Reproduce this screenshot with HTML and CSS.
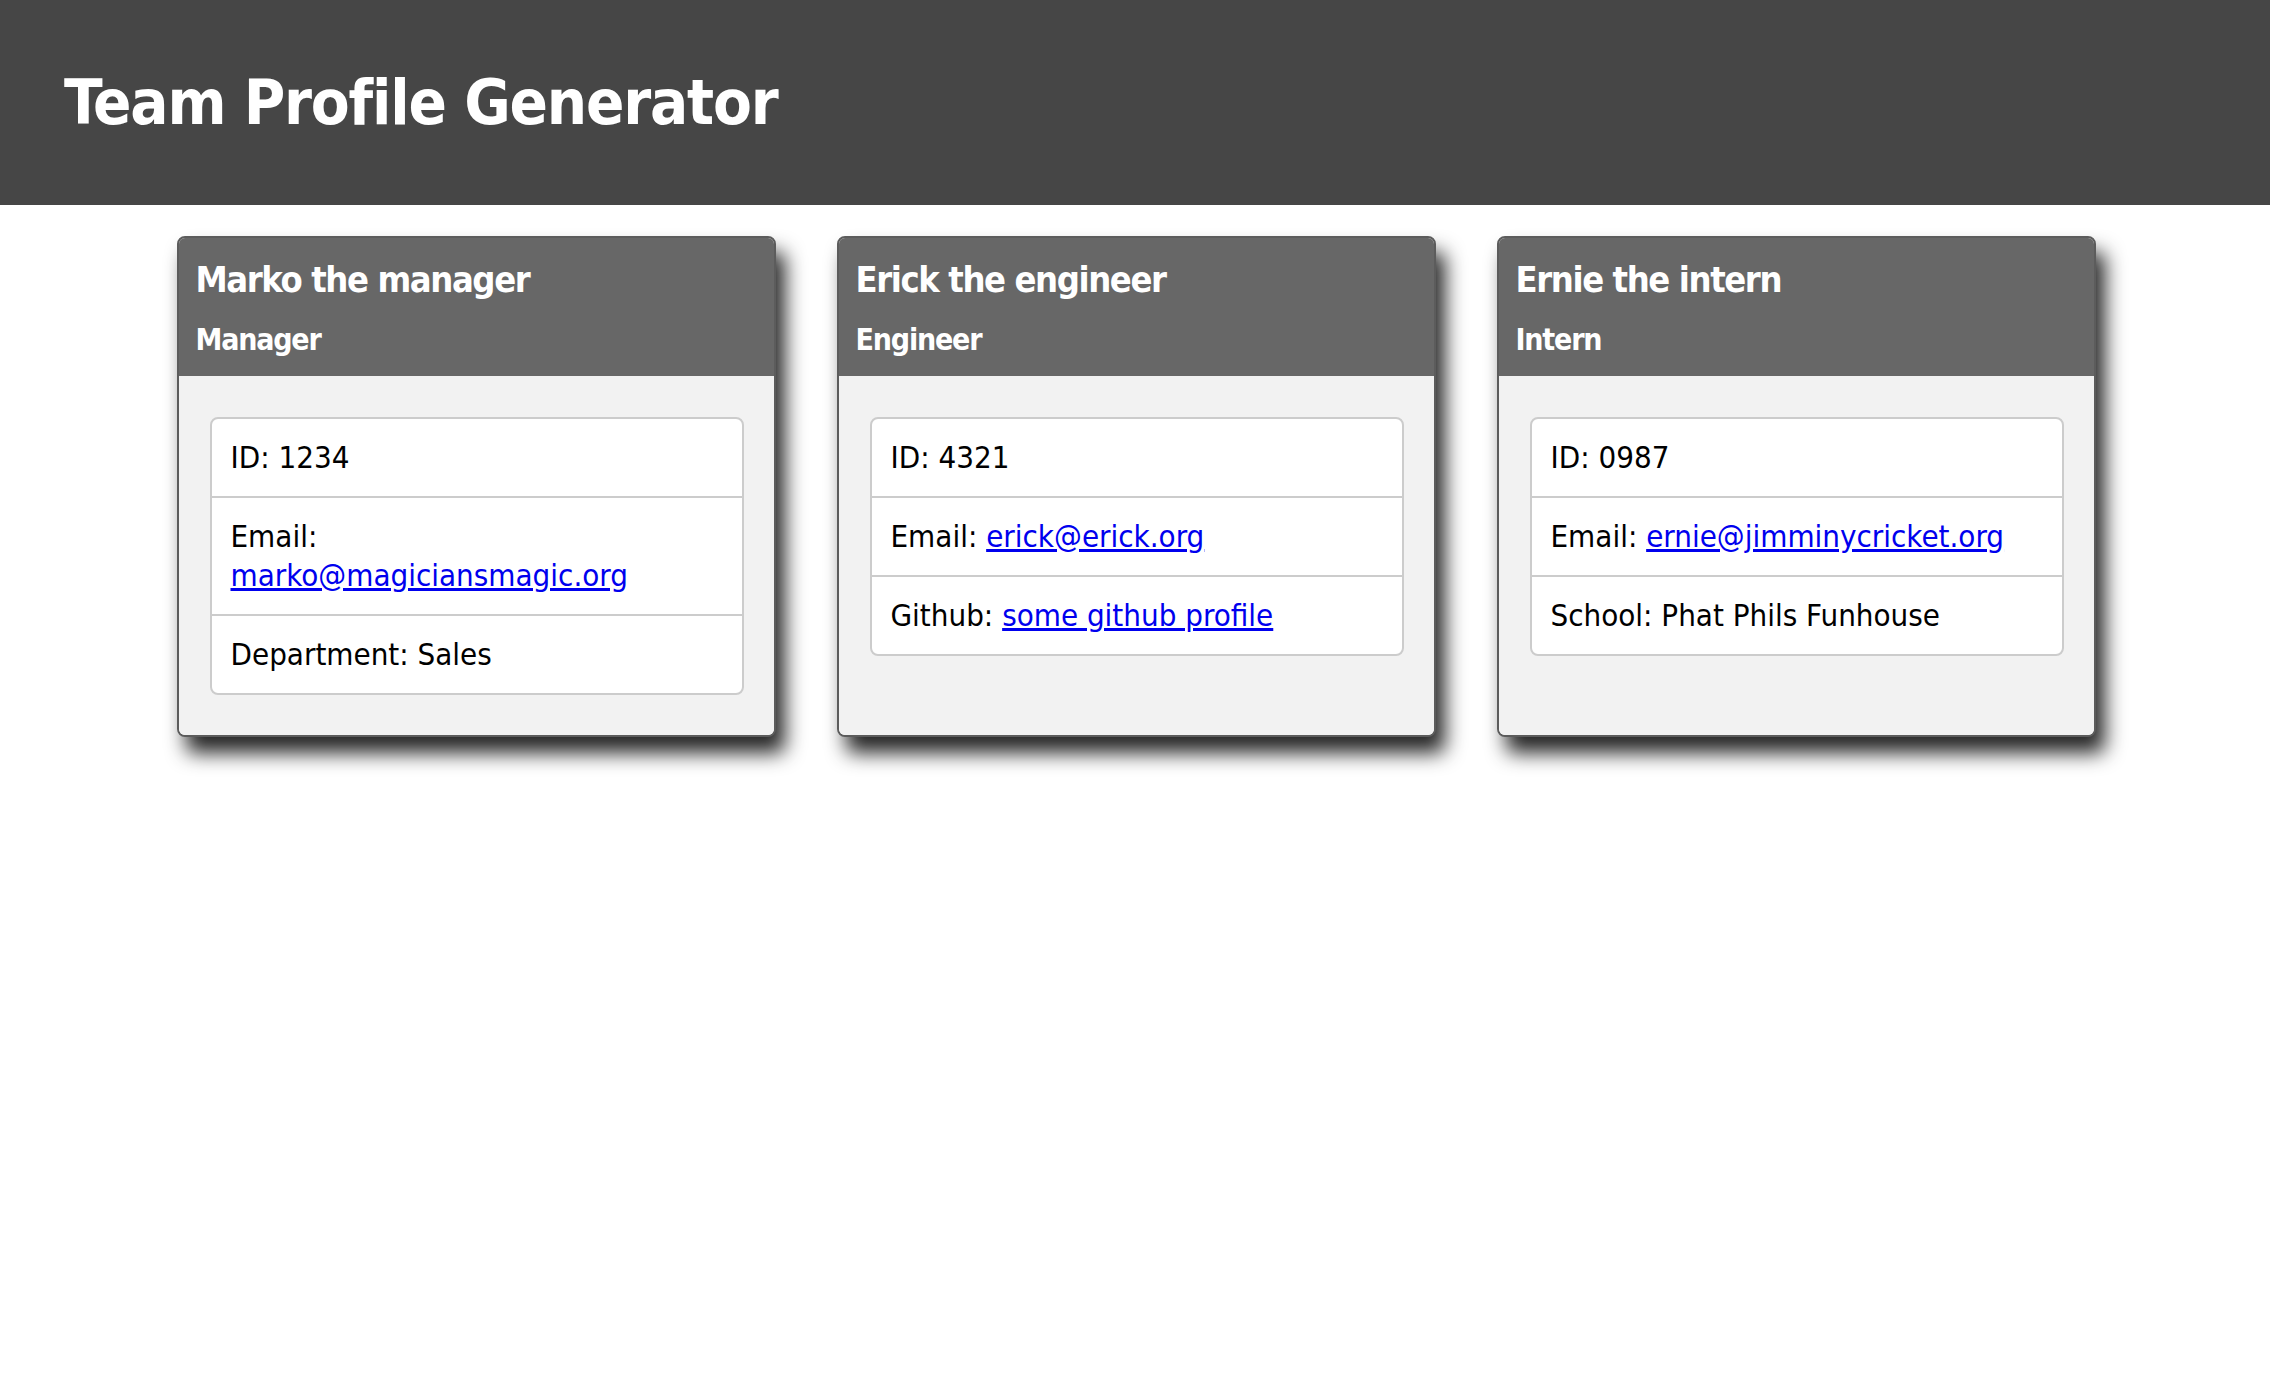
FILE: index.html
```html
<!DOCTYPE html>
<html lang="en">
<head>
<meta charset="utf-8">
<title>Team Profile Generator</title>
<link rel="stylesheet" href="styles.css">
</head>
<body>
<header class="topbar">
  <h1 class="title">Team Profile Generator</h1>
</header>
<main class="team">
  <section class="card">
    <div class="card-head">
      <h2 class="name">Marko the manager</h2>
      <h3 class="role">Manager</h3>
    </div>
    <div class="card-body">
      <ul class="info">
        <li class="info-row">ID: 1234</li>
        <li class="info-row">Email: <a href="mailto:marko@magiciansmagic.org">marko@magiciansmagic.org</a></li>
        <li class="info-row">Department: Sales</li>
      </ul>
    </div>
  </section>
  <section class="card">
    <div class="card-head">
      <h2 class="name">Erick the engineer</h2>
      <h3 class="role">Engineer</h3>
    </div>
    <div class="card-body">
      <ul class="info">
        <li class="info-row">ID: 4321</li>
        <li class="info-row">Email: <a href="mailto:erick@erick.org">erick@erick.org</a></li>
        <li class="info-row">Github: <a href="#">some github profile</a></li>
      </ul>
    </div>
  </section>
  <section class="card">
    <div class="card-head">
      <h2 class="name">Ernie the intern</h2>
      <h3 class="role">Intern</h3>
    </div>
    <div class="card-body">
      <ul class="info">
        <li class="info-row">ID: 0987</li>
        <li class="info-row">Email: <a href="mailto:ernie@jimminycricket.org">ernie@jimminycricket.org</a></li>
        <li class="info-row">School: Phat Phils Funhouse</li>
      </ul>
    </div>
  </section>
</main>
</body>
</html>
```
FILE: styles.css
```css
html, body {
  margin: 0;
  padding: 0;
  background: #ffffff;
  min-height: 100%;
}
body {
  font-family: "DejaVu Sans Condensed", "DejaVu Sans", sans-serif;
  font-stretch: condensed;
  color: #000;
}
.topbar {
  background: #464646;
  height: 205px;
  box-sizing: border-box;
  padding: 71px 0 0 64px;
}
.title {
  margin: 0;
  font-size: 63px;
  line-height: 63px;
  letter-spacing: -1.2px;
  font-weight: bold;
  color: #ffffff;
}
.team {
  display: flex;
  justify-content: center;
  align-items: flex-start;
  gap: 61px;
  padding: 31px 0 80px 2px;
}
.card {
  width: 599px;
  height: 501px;
  box-sizing: border-box;
  border: 2px solid #5c5c5c;
  border-radius: 8px;
  display: flex;
  flex-direction: column;
  box-shadow: 9px 16px 20px rgba(0, 0, 0, 0.85);
  background: #f2f2f2;
}
.card-head {
  background: #676767;
  color: #ffffff;
  padding: 19px 17px 17px;
  border-radius: 6px 6px 0 0;
}
.name {
  margin: 0;
  font-size: 36px;
  line-height: 45px;
  letter-spacing: -1.4px;
  font-weight: bold;
}
.role {
  margin: 18px 0 0;
  font-size: 30px;
  line-height: 39px;
  letter-spacing: -1.2px;
  font-weight: bold;
}
.card-body {
  flex: 1;
  background: #f2f2f2;
  padding: 41px 30px 40px 31px;
  border-radius: 0 0 6px 6px;
}
.info {
  list-style: none;
  margin: 0;
  padding: 0;
  background: #ffffff;
  border: 2px solid #cccccc;
  border-radius: 8px;
}
.info-row {
  font-size: 31px;
  line-height: 39px;
  padding: 19px 19px;
}
.info-row + .info-row {
  border-top: 2px solid #cccccc;
}
.info-row a {
  color: #0000ee;
  text-decoration: underline;
}
```
